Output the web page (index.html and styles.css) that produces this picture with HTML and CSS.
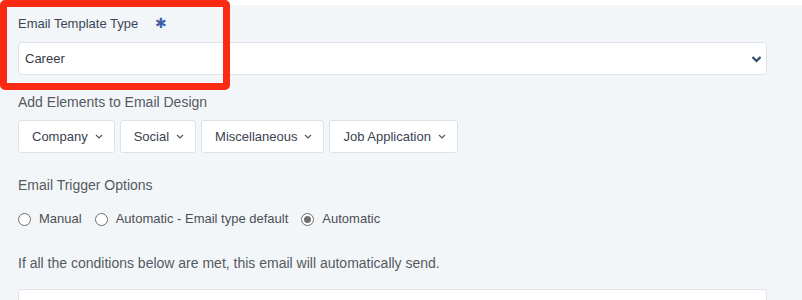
FILE: index.html
```html
<!DOCTYPE html>
<html lang="en">
<head>
    <meta charset="UTF-8">
    <title>Email Template</title>
    <link rel="stylesheet" href="styles.css">
</head>
<body>
    <main class="panel">
        <div class="field">
            <p class="label">Email Template Type <span class="req">&#x2731;</span></p>
            <div class="select">
                <span>Career</span>
                <svg width="11" height="8" viewBox="0 0 11 8"><path d="M1.5 2 L5.5 6 L9.5 2" fill="none" stroke="#2e4566" stroke-width="2.2"/></svg>
            </div>
        </div>

        <p class="label label-big label-add">Add Elements to Email Design</p>
        <div class="btnRow">
            <button class="dropBtn">Company <svg width="8" height="5" viewBox="0 0 8 5"><path d="M1 1 L4 4 L7 1" fill="none" stroke="#555" stroke-width="1.2"/></svg></button>
            <button class="dropBtn">Social <svg width="8" height="5" viewBox="0 0 8 5"><path d="M1 1 L4 4 L7 1" fill="none" stroke="#555" stroke-width="1.2"/></svg></button>
            <button class="dropBtn">Miscellaneous <svg width="8" height="5" viewBox="0 0 8 5"><path d="M1 1 L4 4 L7 1" fill="none" stroke="#555" stroke-width="1.2"/></svg></button>
            <button class="dropBtn">Job Application <svg width="8" height="5" viewBox="0 0 8 5"><path d="M1 1 L4 4 L7 1" fill="none" stroke="#555" stroke-width="1.2"/></svg></button>
        </div>

        <p class="label label-big label-trigger">Email Trigger Options</p>
        <div class="radioRow">
            <label class="radio"><span class="dot"></span>Manual</label>
            <label class="radio"><span class="dot"></span>Automatic - Email type default</label>
            <label class="radio"><span class="dot on"></span>Automatic</label>
        </div>

        <p class="label label-big label-info">If all the conditions below are met, this email will automatically send.</p>
        <div class="condBox"></div>
    </main>
    <div class="highlight"></div>
</body>
</html>
```

FILE: styles.css
```css
*{
    margin: 0; padding: 0;
    box-sizing: border-box;
    font-family: "Liberation Sans", Arial, sans-serif;
}
body{
    background-color: #ffffff;
    width: 802px;
    height: 300px;
    overflow: hidden;
    position: relative;
}
.panel{
    margin-top: 5px;
    background-color: #f3f6f9;
    padding: 10px 35px 0 18px;
    height: 295px;
}
.label{
    font-size: 13px;
    line-height: 16px;
    color: #4b4f55;
}
.label-big{
    font-size: 14px;
    color: #555a60;
}
.field .label{
    color: #3b4656;
}
.req{
    color: #3c62a6;
    font-size: 14px;
    margin-left: 13px;
}
.select{
    margin-top: 10px;
    height: 33px;
    background-color: #fff;
    border: 1px solid #dde2e8;
    border-radius: 4px;
    display: flex;
    align-items: center;
    justify-content: space-between;
    padding: 0 4px 0 6px;
    font-size: 13px;
    color: #333b47;
}
.label-add{
    margin-top: 19px;
}
.btnRow{
    display: flex;
    gap: 5px;
    margin-top: 10px;
}
.dropBtn{
    height: 33px;
    background-color: #fff;
    border: 1px solid #dde2e8;
    border-radius: 3px;
    display: flex;
    align-items: center;
    gap: 7px;
    padding: 0 11px 0 13px;
    font-size: 13px;
    color: #3b4250;
}
.label-trigger{
    margin-top: 24px;
}
.radioRow{
    display: flex;
    gap: 13px;
    margin-top: 18px;
}
.radio{
    display: flex;
    align-items: center;
    gap: 8px;
    font-size: 13px;
    line-height: 16px;
    color: #4b4f55;
}
.dot{
    width: 13px;
    height: 13px;
    border: 1px solid #6d6d6d;
    border-radius: 50%;
    background-color: #fff;
    display: inline-flex;
    align-items: center;
    justify-content: center;
}
.dot.on::after{
    content: "";
    width: 7px;
    height: 7px;
    border-radius: 50%;
    background-color: #6f6f6f;
}
.label-info{
    margin-top: 28px;
}
.condBox{
    margin-top: 18px;
    height: 40px;
    background-color: #fff;
    border: 1px solid #dde2e8;
    border-radius: 4px;
}
.highlight{
    position: absolute;
    left: 0;
    top: 0;
    width: 230px;
    height: 90px;
    border: 7px solid #fb2a12;
    border-radius: 5px;
}
```
